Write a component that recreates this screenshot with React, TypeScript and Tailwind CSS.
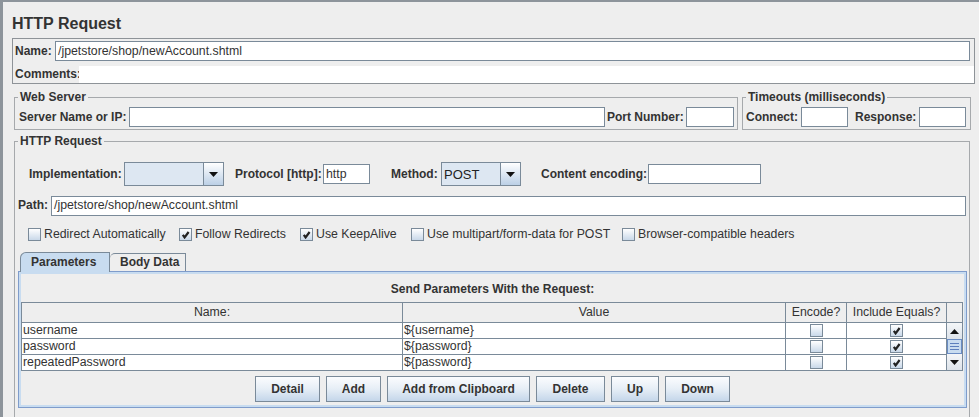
import React from "react";

type Box = { className?: string; children?: React.ReactNode };

function Field({ className = "", children }: Box) {
  return (
    <div className={`flex h-[20px] shrink-0 items-center border border-[#7a8a99] bg-white pl-[2px] text-[12.3px] text-[#333] ${className}`}>
      {children}
    </div>
  );
}

function Label({ className = "", children }: Box) {
  return <span className={`shrink-0 whitespace-nowrap font-bold text-[#333] ${className}`}>{children}</span>;
}

function Arrow({ up }: { up?: boolean }) {
  return (
    <svg width="9" height="5" viewBox="0 0 9 5">
      <path d={up ? "M0 5 L4.5 0 L9 5Z" : "M0 0 L4.5 5 L9 0Z"} fill="#111" />
    </svg>
  );
}

function Combo({ className = "", value }: { className?: string; value?: string }) {
  return (
    <div className={`flex h-[24px] shrink-0 border border-[#7a8a99] bg-[#dde7f2] ${className}`}>
      <div className="flex flex-1 items-center pl-[2px] text-[13px] text-[#222]">{value}</div>
      <div className="flex w-[20px] items-center justify-center border-l border-[#7a8a99] bg-linear-to-b from-white to-[#bcd0e6]">
        <Arrow />
      </div>
    </div>
  );
}

function Check({ checked }: { checked?: boolean }) {
  return (
    <span className="flex h-[13px] w-[13px] shrink-0 items-center justify-center border border-[#7a8a99] bg-linear-to-b from-white to-[#c9d8e9]">
      {checked && (
        <svg width="9" height="9" viewBox="0 0 9 9">
          <path d="M1.8 4.8 L3.6 7.4 L7.6 2" fill="none" stroke="#222" strokeWidth="2.2" />
        </svg>
      )}
    </span>
  );
}

function Option({ className = "", checked, children }: Box & { checked?: boolean }) {
  return (
    <div className={`flex shrink-0 items-center gap-[3px] ${className}`}>
      <Check checked={checked} />
      <span className="whitespace-nowrap text-[12.3px] text-[#333]">{children}</span>
    </div>
  );
}

function Btn({ className = "", children }: Box) {
  return (
    <div className={`flex h-[26px] items-center justify-center border border-[#7a8a99] bg-linear-to-b from-[#fbfcfe] via-[#e6eef6] to-[#c4d6ea] font-bold text-[#333] ${className}`}>
      {children}
    </div>
  );
}

const params = [
  { name: "username", value: "${username}" },
  { name: "password", value: "${password}" },
  { name: "repeatedPassword", value: "${password}" },
];

export default function App() {
  return (
    <div className="h-[417px] w-[979px] overflow-hidden border-l-[3px] border-t-2 border-[#8d949b] bg-[#eeeeee] font-['Liberation_Sans',Arial,sans-serif] text-[12px] leading-[15px] text-[#333]">
      <div className="pl-[9px] pt-[13px]">
        <h1 className="text-[16px] font-bold leading-[18px] text-[#333]">HTTP Request</h1>

        {/* name / comments */}
        <div className="mt-[5px] w-[963px] border border-[#8e9398] pt-[2px]">
          <div className="flex h-[20px] items-center pl-[2px] pr-[4px]">
            <Label className="w-[40px]">Name:</Label>
            <Field className="flex-1">/jpetstore/shop/newAccount.shtml</Field>
          </div>
          <div className="mt-[5px] flex h-[17px] items-center pl-[2px]">
            <Label className="w-[64px]">Comments:</Label>
            <div className="h-full flex-1 bg-white" />
          </div>
        </div>

        {/* web server + timeouts */}
        <div className="ml-[2px] mt-[6px] flex gap-[4px]">
          <fieldset className="w-[724px] border border-[#a6a9ac]">
            <legend className="ml-[3px] px-[2px] font-bold leading-[15px]">Web Server</legend>
            <div className="flex items-center py-[2px] pl-[4px] pr-[3px]">
              <Label className="w-[110px]">Server Name or IP:</Label>
              <Field className="flex-1" />
              <Label className="ml-[2px] w-[79px]">Port Number:</Label>
              <Field className="w-[48px]" />
            </div>
          </fieldset>
          <fieldset className="w-[229px] border border-[#a6a9ac]">
            <legend className="ml-[3px] px-[2px] font-bold leading-[15px]">Timeouts (milliseconds)</legend>
            <div className="flex items-center py-[2px] pl-[3px] pr-[3px]">
              <Label className="w-[55px]">Connect:</Label>
              <Field className="w-[47px]" />
              <Label className="ml-[7px] w-[64px]">Response:</Label>
              <Field className="w-[47px]" />
            </div>
          </fieldset>
        </div>

        {/* http request */}
        <fieldset className="ml-[2px] mt-[4px] w-[956px] border border-[#a6a9ac] pb-[20px]">
          <legend className="ml-[3px] px-[2px] font-bold leading-[15px]">HTTP Request</legend>

          <div className="mt-[13px] flex h-[24px] items-center pl-[14px]">
            <Label className="w-[95px]">Implementation:</Label>
            <Combo className="w-[100px]" />
            <Label className="ml-[11px] w-[88px]">Protocol [http]:</Label>
            <Field className="w-[47px]">http</Field>
            <Label className="ml-[21px] w-[50px]">Method:</Label>
            <Combo className="w-[80px]" value="POST" />
            <Label className="ml-[20px] w-[107px]">Content encoding:</Label>
            <Field className="w-[113px]" />
          </div>

          <div className="mt-[10px] flex h-[19px] items-center pl-[3px]">
            <Label className="w-[33px]">Path:</Label>
            <Field className="h-[19px] w-[915px]">/jpetstore/shop/newAccount.shtml</Field>
          </div>

          <div className="mt-[12px] flex h-[14px] items-center pl-[13px]">
            <Option className="w-[151px]">Redirect Automatically</Option>
            <Option className="w-[121px]" checked>Follow Redirects</Option>
            <Option className="w-[111px]" checked>Use KeepAlive</Option>
            <Option className="w-[211px]">Use multipart/form-data for POST</Option>
            <Option>Browser-compatible headers</Option>
          </div>

          {/* tabs */}
          <div className="ml-[3px] mt-[11px]">
            <div className="flex h-[19px] items-start pl-[2px]">
              <div className="relative z-10 flex h-[20px] w-[90px] items-center rounded-tl-[6px] border border-b-0 border-[#7a8a99] bg-[#c8dcf0] pl-[10px] font-bold">
                Parameters
              </div>
              <div className="mt-[1px] flex h-[18px] w-[76px] items-center rounded-tl-[5px] border border-b-0 border-l-0 border-[#7a8a99] bg-[#eeeeee] pl-[10px] font-bold">
                Body Data
              </div>
            </div>

            <div className="w-[949px] border border-[#7f9ccb] pb-[5px] pt-[10px] shadow-[inset_0_0_0_2px_#c8dcf0]">
              <div className="text-center font-bold">Send Parameters With the Request:</div>

              <div className="ml-[2px] mt-[5px] flex w-[942px] border border-b-0 border-[#7a8a99] text-[12.3px]">
                <div className="flex-1">
                  <div className="flex h-[20px] border-b border-[#7a8a99] bg-[#eeeeee] text-[#333]">
                    <div className="w-[381px] border-r border-[#7a8a99] text-center leading-[19px]">Name:</div>
                    <div className="w-[383px] border-r border-[#7a8a99] text-center leading-[19px]">Value</div>
                    <div className="w-[61px] border-r border-[#7a8a99] text-center leading-[19px]">Encode?</div>
                    <div className="w-[100px] border-r border-[#7a8a99] text-center leading-[19px]">Include Equals?</div>
                  </div>
                  {params.map((p) => (
                    <div key={p.name} className="flex h-[16px] border-b border-[#7a8a99] bg-white text-[#333]">
                      <div className="w-[381px] border-r border-[#7a8a99] pl-[1px] leading-[15px]">{p.name}</div>
                      <div className="w-[383px] border-r border-[#7a8a99] pl-[1px] leading-[15px]">{p.value}</div>
                      <div className="flex w-[61px] items-center justify-center border-r border-[#7a8a99]">
                        <Check />
                      </div>
                      <div className="flex w-[100px] items-center justify-center border-r border-[#7a8a99]">
                        <Check checked />
                      </div>
                    </div>
                  ))}
                </div>
                <div className="w-[15px] border-b border-[#7a8a99]">
                  <div className="h-[20px] border-b border-[#7a8a99] bg-[#eeeeee]" />
                  <div className="flex h-[16px] items-center justify-center bg-linear-to-b from-[#f4f6f8] to-[#dde3ea]">
                    <Arrow up />
                  </div>
                  <div className="flex h-[15px] flex-col items-center justify-center gap-[2px] border border-[#6a8cc4] bg-[#c8dcf0]">
                    <div className="h-px w-[9px] bg-[#5c7fbd]" />
                    <div className="h-px w-[9px] bg-[#5c7fbd]" />
                    <div className="h-px w-[9px] bg-[#5c7fbd]" />
                  </div>
                  <div className="flex h-[16px] items-center justify-center bg-linear-to-b from-[#f4f6f8] to-[#dde3ea]">
                    <Arrow />
                  </div>
                </div>
              </div>

              <div className="mt-[5px] flex justify-center gap-[6px]">
                <Btn className="w-[65px]">Detail</Btn>
                <Btn className="w-[55px]">Add</Btn>
                <Btn className="w-[143px]">Add from Clipboard</Btn>
                <Btn className="w-[69px]">Delete</Btn>
                <Btn className="w-[48px]">Up</Btn>
                <Btn className="w-[65px]">Down</Btn>
              </div>
            </div>
          </div>
        </fieldset>
      </div>
    </div>
  );
}
